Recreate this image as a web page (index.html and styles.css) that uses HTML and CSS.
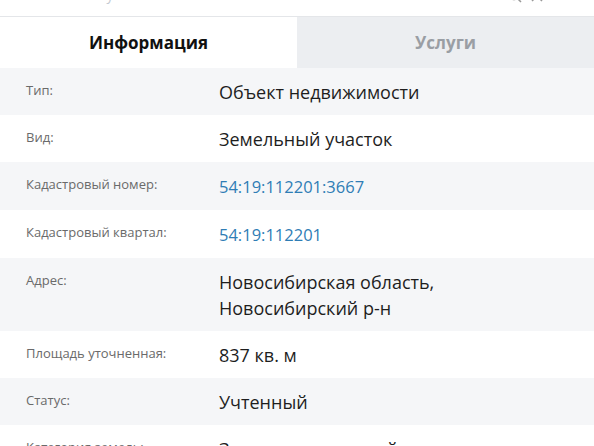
FILE: index.html
```html
<!DOCTYPE html>
<html lang="ru">
<head>
<meta charset="utf-8">
<title>Кадастровая карточка</title>
<link rel="stylesheet" href="styles.css">
</head>
<body>
<div class="card">
  <header class="card-head">
    <span class="card-title">Земельный участок 54:19:112201:3667</span>
    <span class="card-tools">
      <svg width="14" height="14" viewBox="0 0 14 14"><circle cx="6" cy="6" r="4.5" fill="none" stroke="#999" stroke-width="1.5"/><path d="M9.5 9.5L13 13" stroke="#999" stroke-width="1.5"/></svg>
      <svg width="14" height="14" viewBox="0 0 14 14"><path d="M2 2l10 10M12 2L2 12" stroke="#999" stroke-width="1.5"/></svg>
    </span>
  </header>
  <nav class="tabs">
    <div class="tab tab-active">Информация</div>
    <div class="tab">Услуги</div>
  </nav>
  <div class="rows">
    <div class="row alt">
      <div class="label">Тип:</div>
      <div class="value">Объект недвижимости</div>
    </div>
    <div class="row">
      <div class="label">Вид:</div>
      <div class="value">Земельный участок</div>
    </div>
    <div class="row alt">
      <div class="label">Кадастровый номер:</div>
      <div class="value"><a class="link" href="#">54:19:112201:3667</a></div>
    </div>
    <div class="row">
      <div class="label">Кадастровый квартал:</div>
      <div class="value"><a class="link" href="#">54:19:112201</a></div>
    </div>
    <div class="row alt">
      <div class="label">Адрес:</div>
      <div class="value">Новосибирская область,<br>Новосибирский р-н</div>
    </div>
    <div class="row">
      <div class="label">Площадь уточненная:</div>
      <div class="value">837 кв. м</div>
    </div>
    <div class="row alt">
      <div class="label">Статус:</div>
      <div class="value">Учтенный</div>
    </div>
    <div class="row">
      <div class="label">Категория земель:</div>
      <div class="value">Земли сельскохозяйственного назначения</div>
    </div>
  </div>
</div>
</body>
</html>
```
FILE: styles.css
```css
html, body {
  margin: 0;
  padding: 0;
  background: #fff;
}

body {
  font-family: "Open Sans", "Noto Sans", sans-serif;
  color: #222;
  overflow: hidden;
}

.card {
  width: 594px;
}

/* title bar, scrolled almost out of view */
.card-head {
  height: 16px;
  display: flex;
  justify-content: space-between;
  align-items: flex-start;
  border-bottom: 1px solid #e4e6e9;
  overflow: hidden;
}

.card-title {
  font-size: 14px;
  line-height: 14px;
  margin-left: 24px;
  margin-top: -12px;
  color: #c4cad2;
}

.card-tools {
  display: flex;
  gap: 8px;
  margin-right: 50px;
  margin-top: -11px;
}

.tabs {
  display: flex;
  height: 51px;
}

.tab {
  flex: 1;
  display: flex;
  align-items: center;
  justify-content: center;
  font-size: 17px;
  font-weight: 700;
  color: #9a9ea4;
  background: #eceef1;
}

.tab-active {
  background: #fff;
  color: #111;
}

.row {
  display: flex;
  padding: 11px 0 10px;
}

.row.alt {
  background: #f5f6f8;
}

.label {
  flex: none;
  width: 193px;
  padding-left: 26px;
  font-size: 13px;
  line-height: 22px;
  color: #6a6a6a;
}

.value {
  font-size: 18px;
  line-height: 26px;
  color: #1e1e1e;
}

.link {
  font-size: 16.5px;
  color: #2f7db5;
  text-decoration: none;
}
```
